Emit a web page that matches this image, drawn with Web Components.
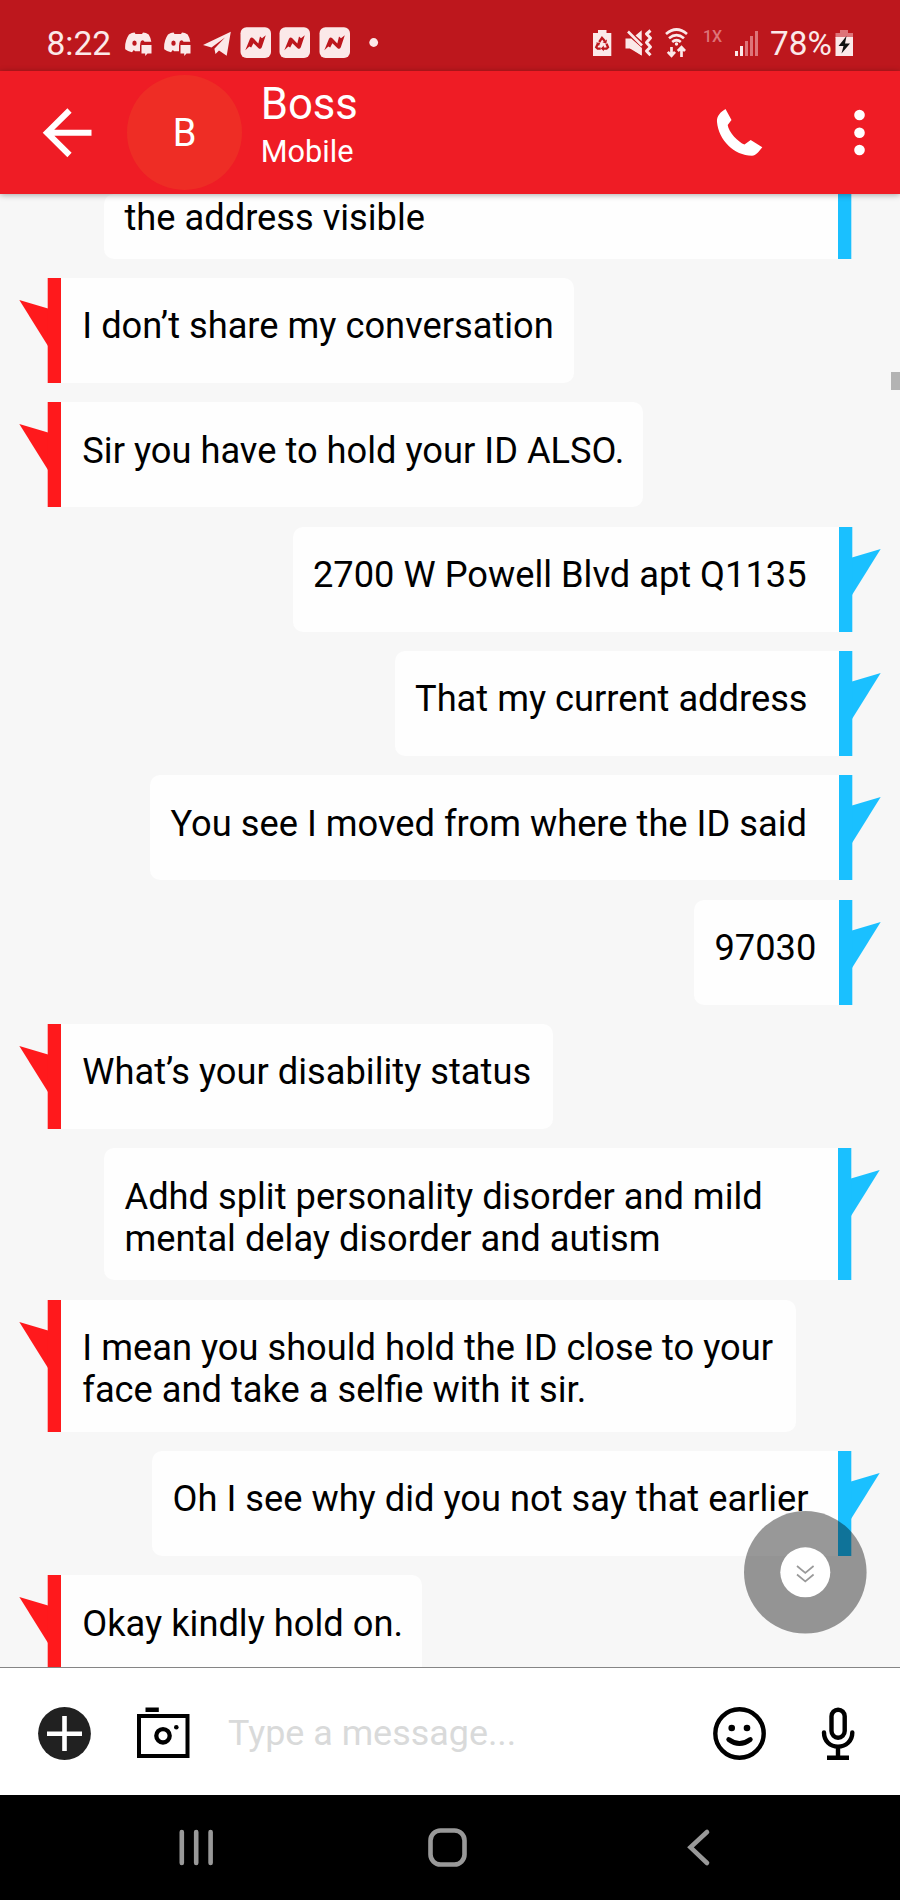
<!DOCTYPE html>
<html lang="en"><head><meta charset="utf-8"><title>Boss - Messages</title>
<style>html,body{margin:0;background:#000}body{width:900px;height:1900px;overflow:hidden;font-family:Roboto,"Liberation Sans",sans-serif}</style></head>
<body><chat-app></chat-app>
<script>
const define=(name,html,after)=>customElements.define(name,class extends HTMLElement{
  constructor(){super();const t=document.createElement('template');t.innerHTML=html;this.attachShadow({mode:'open'}).append(t.content.cloneNode(true));}
  connectedCallback(){if(after)after.call(this);}
});
const discord=x=>`<svg style="width:27px" viewBox="${x} 23 27 40"><g transform="translate(${x} 0)"><path fill="#fbe9e9" fill-rule="evenodd" d="M4 34.5Q7 32.4 9.6 32.5L10.500 34H17L18 32.500Q21 32.600 23.700 34.500Q25.600 37.500 26.300 41.800H19.500Q19 40.300 17.600 40.300Q15.500 40.500 15.300 43.300Q15.300 44.800 15 45.500V51.300H10.200L8.800 50L7 52.300Q2.500 51.500 .2 49.300Q-.5 41 4 34.500ZM9.500 40.600A2.200 2.600 0 1 0 9.500 45.800A2.200 2.600 0 1 0 9.500 40.600Z"/><path fill="#fbe9e9" d="M16.500 45H26.500V53.500H22.500L20.200 56V53.500H16.500Z"/></g></svg>`;
const news=x=>`<svg style="width:32px" viewBox="${x} 23 32 40"><g transform="translate(${x} 0)"><rect x=".5" y="27.300" width="30.500" height="30.700" rx="6" fill="#fbe9e9"/><path fill="#bd171d" d="M5.300 50.300L10 38.800Q11.500 36.500 13.300 38.300L18.300 43.500L20 36.500L22 38.200L25.800 35.200L21.800 47.300Q20.500 50 18.300 48L13.400 43.200L11.200 47.500L9.300 46.500Z"/></g></svg>`;
define('status-bar',`<style>
:host{display:flex;height:48px;padding-top:23px;background:#bd171d;color:#fbe9e9;box-sizing:content-box}
svg{display:block;height:40px;flex:none}span{display:block;line-height:42px;white-space:nowrap;flex:none}
.t{width:78.500px;padding-left:46.500px;font-size:33.500px}.s{flex:1}.x{font-size:16px;width:32px;padding-left:14px;line-height:27px;color:#dd7479;font-weight:500}.p{font-size:33.300px;width:65px;padding-left:10px}</style>
<span class="t">8:22</span>${discord(125)}<svg style="width:12px"></svg>${discord(164)}
<svg style="width:49px" viewBox="191 23 49 40"><path fill="#fbe9e9" d="M203 45L230.800 31.700L226.700 55.800L219 50.500L215.500 54L214.400 48.800L225 37.500L211.500 47.600Z"/></svg>
${news(240)}<svg style="width:7px"></svg>${news(279)}<svg style="width:8px"></svg>${news(319)}
<svg style="width:39px" viewBox="351 23 39 40"><circle cx="373.700" cy="42.500" r="4.400" fill="#fbe9e9"/></svg><i class="s"></i>
<svg style="width:28px" viewBox="590 23 28 40"><path fill="#fbe9e9" d="M598 30H606.500V33H611.300V56H593V33H598Z"/><g fill="none" stroke="#bd171d" stroke-width="2.300"><path d="M599.200 42L602 37.800L604.800 41"/><path d="M606.500 43.800L608 47.200L606.500 48.700H603"/><path d="M597.800 43.800L596.200 47.200L597.700 48.700H600.700"/></g><path fill="#bd171d" d="M607 39.500L606.300 43.800L602.500 42.200ZM603.800 45.500V51.300L600.800 48.500ZM596 42.500L600.200 42.800L599 46Z"/></svg>
<svg style="width:42px" viewBox="618 23 42 40"><path fill="#fbe9e9" d="M625.500 38.500H631L641.700 48V55.500L631.500 48.500H625.500ZM641.700 30.300V41L635.500 35.500Z"/><path fill="#fbe9e9" d="M631 38.500L641.700 48V55.500L630 48.500Z"/><path d="M628 31.500L642 45.500" stroke="#fbe9e9" stroke-width="2.600"/><path d="M650.500 30.500L646.500 34L650.500 38L646.500 42.500L650.500 47L646.500 51L650.500 55.300" fill="none" stroke="#fbe9e9" stroke-width="3" stroke-linejoin="round"/></svg>
<svg style="width:29px" viewBox="660 23 29 40"><g fill="none" stroke="#fbe9e9" stroke-width="2.700"><path d="M666 34Q676.500 25 687 34"/><path d="M669 38.200Q676.500 32 684 38.200"/><path d="M672.200 42Q676.500 38.500 680.800 42"/><path d="M671.500 47V55M667.800 51.800L671.500 55.800L675 51.800M681.500 57V48M677.800 51L681.500 47.300L685 51"/></g><circle cx="676.500" cy="44" r="1.700" fill="#fbe9e9"/></svg>
<span class="x">1X</span>
<svg style="width:25px" viewBox="735 23 25 40"><g fill="#fbe9e9"><path d="M735 51H738V56H735ZM740 46H743V56H740Z"/><path fill="#de7479" d="M745 41H748V56H745ZM750 36H753V56H750ZM755 31H758V56H755Z"/></g></svg>
<span class="p">78%</span>
<svg style="width:65px" viewBox="835 23 65 40"><path fill="#dd7479" d="M840 30H848V33H853V38H835.500V33H840Z"/><path fill="#fbe9e9" d="M835.500 37H853V56H835.500Z"/><path fill="#111" d="M846.500 36L838.500 46H843.500L841.500 53.500L850 43.500H845Z"/></svg>`);
define('chat-header',`<style>:host{display:flex;height:122.500px;background:#ef1c25;color:#fff;position:relative;z-index:2;box-shadow:0 1px 6px #0005}
svg{display:block;flex:none;height:122px}.av{width:115px;height:115px;border-radius:50%;background:#ee2d25;margin:4px 18.700px 0 0;flex:none;text-align:center;line-height:116px;font-size:38px}
.n{flex:1;display:flex;flex-direction:column}.b{font-size:43.700px;line-height:52px;margin-top:7px}.m{font-size:30.700px;line-height:36px;margin-top:3.500px}</style>
<svg style="width:127px" viewBox="0 71 127 122"><path d="M91.500 132.700H48M69.500 110.500L47 132.700L69.500 155" fill="none" stroke="#fff" stroke-width="6"/></svg>
<div class="av">B</div><div class="n"><div class="b">Boss</div><div class="m">Mobile</div></div>
<svg style="width:200px" viewBox="700 71 200 122"><path fill="#fff" d="M725.500 109C720.500 112 716.500 116 717 122C718.500 140 734 155.500 752 155.700C756 155.500 759 151.500 762.300 147.200L750.700 140L744.500 144.500C738.500 142.500 728.500 132 727.700 125L731.500 120Z"/><g fill="#fff"><circle cx="859.500" cy="115" r="5.300"/><circle cx="859.500" cy="132.700" r="5.300"/><circle cx="859.500" cy="150" r="5.300"/></g></svg>`);
define('chat-message',`<style>:host{display:flex;height:105px;margin:0 0 19.350px 19px;flex:none;font-size:36.250px;line-height:42.300px;color:#000}
:host([lines="2"]){height:132px}
:host([sent]){flex-direction:row-reverse;margin:0 19px 19.350px 0}
:host([sent][near]){margin-right:20px}
svg{display:block;flex:none;width:42px;height:100%;overflow:hidden;fill:#ff191c}
:host([sent]) svg{transform:scaleX(-1);fill:#1ac0ff}
.b{background:#fefefe;border-radius:0 10px 10px 0;padding:27.500px 0 0 21.300px;box-sizing:border-box;white-space:nowrap}
:host([sent]) .b{border-radius:10px 0 0 10px;padding-left:20.500px}
:host([cut]){height:65px}:host([cut]) .b{padding-top:3px}:host([cut]) .tail{display:none}
</style><svg><path class="tail" d="M.3 22L29 30.500V68Z"/><rect x="28.700" width="13.300" height="140"/></svg><div class="b"><slot></slot></div>`,function(){
  this.shadowRoot.querySelector('.b').style.width=this.getAttribute('w')+'px';
});
define('message-list',`<style>:host{display:flex;flex-direction:column;height:1473px;background:#f7f7f7;overflow:hidden;position:relative}
.thumb{position:absolute;right:0;top:178.500px;width:9px;height:17.500px;background:#b3b3b3}
.fab{position:absolute;left:744.300px;top:1317.500px;width:122.600px;height:122.600px}</style><slot></slot><div class="thumb"></div>
<svg class="fab" viewBox="0 0 122.600 122.600"><circle cx="61.300" cy="61.300" r="61.300" fill="#000" fill-opacity=".4"/><circle cx="61.300" cy="61.300" r="25" fill="#fff"/><path d="M53 55L61.300 62L69.600 55M53 63.500L61.300 70.500L69.600 63.500" fill="none" stroke="#999" stroke-width="1.700"/></svg>`);
define('message-composer',`<style>:host{display:flex;height:128.500px;box-sizing:border-box;border-top:1.500px solid #858585;background:#fff}svg{display:block;height:127px;flex:none}
.i{flex:1;font-size:35.900px;line-height:131px;height:127px;color:#d9dada}</style>
<svg style="width:228px" viewBox="0 1668 228 127"><circle cx="64.500" cy="1733.500" r="26.400" fill="#212121"/><path d="M47 1733.700H82M64.500 1716V1751" stroke="#fff" stroke-width="4.600"/><rect x="139" y="1716" width="48.500" height="40" fill="none" stroke="#000" stroke-width="4"/><path d="M145.500 1707.500H158.800V1712H145.500Z"/><circle cx="163" cy="1735.800" r="6.700" fill="none" stroke="#000" stroke-width="4.300"/><circle cx="176.300" cy="1727.200" r="2.300"/></svg>
<div class="i">Type a message...</div>
<svg style="width:200px" viewBox="700 1668 200 127"><g fill="none" stroke="#000" stroke-width="4.400"><circle cx="739.500" cy="1733.500" r="24.200"/><path d="M728.700 1739.500Q739.500 1747.500 750.300 1739.500" stroke-linecap="round" stroke-width="4.800"/><rect x="831.500" y="1709.700" width="13.200" height="28" rx="6.600"/><path d="M824 1732.500C824 1741 830 1746.600 838 1746.600S852.300 1741 852.300 1732.500" stroke-linecap="round"/><path d="M838 1746V1758M827 1757.700H849"/></g><circle cx="731.700" cy="1728" r="3.300"/><circle cx="747" cy="1728" r="3.300"/></svg>`);
define('nav-bar',`<style>:host{display:block;height:105px;background:#000}svg{display:block}</style><svg width="900" height="105" viewBox="0 1795 900 105"><g fill="none" stroke="#999" stroke-width="4.600" stroke-linecap="round" stroke-linejoin="round"><path d="M181.800 1832V1863M196.200 1832V1863M210.600 1832V1863"/><rect x="430.500" y="1830.500" width="34" height="34" rx="10"/><path d="M707 1832L690.500 1847.300L707 1863" stroke-linejoin="miter"/></g></svg>`);
define('chat-app',`<style>:host{display:flex;flex-direction:column;width:900px;height:1900px}</style>
<status-bar></status-bar><chat-header></chat-header><message-list>
<chat-message sent near cut w="734">the address visible</chat-message>
<chat-message w="513">I don’t share my conversation</chat-message>
<chat-message w="582">Sir you have to hold your ID ALSO.</chat-message>
<chat-message sent w="546.500">2700 W Powell Blvd apt Q1135</chat-message>
<chat-message sent w="444.500">That my current address</chat-message>
<chat-message sent w="689">You see I moved from where the ID said</chat-message>
<chat-message sent w="145">97030</chat-message>
<chat-message w="492">What’s your disability status</chat-message>
<chat-message sent near lines="2" w="734">Adhd split personality disorder and mild<br>mental delay disorder and autism</chat-message>
<chat-message lines="2" w="735">I mean you should hold the ID close to your<br>face and take a selfie with it sir.</chat-message>
<chat-message sent near w="686">Oh I see why did you not say that earlier</chat-message>
<chat-message w="361">Okay kindly hold on.</chat-message>
</message-list><message-composer></message-composer><nav-bar></nav-bar>`);
</script></body></html>
